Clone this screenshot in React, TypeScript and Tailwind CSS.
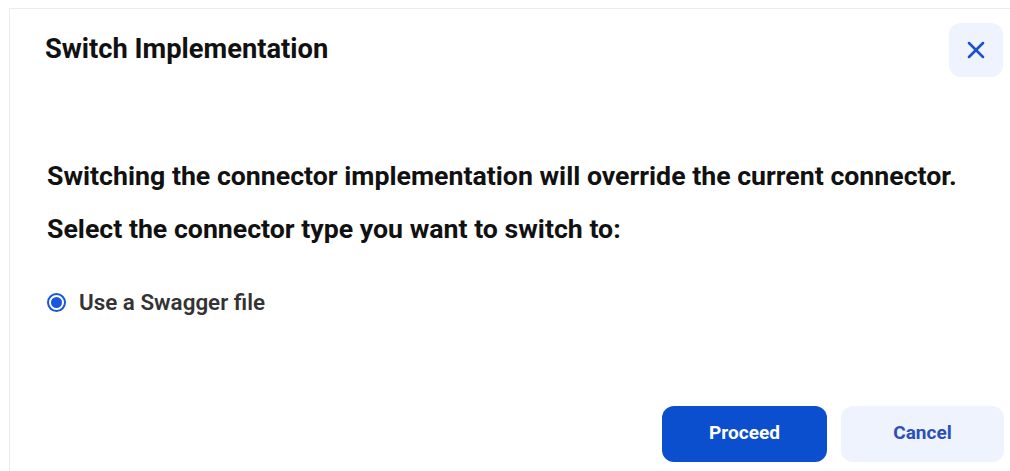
import { useState } from "react";
import { X } from "lucide-react";

export default function App() {
  const [choice, setChoice] = useState("swagger");

  return (
    <div className="h-[471px] w-[1010px] overflow-hidden bg-white pl-[9px] pt-[8px] font-['Roboto',sans-serif]">
      {/* dialog panel, bleeds past the right and bottom edges */}
      <div className="flex h-[480px] w-[1020px] flex-col border-l border-t border-[#ececec] bg-white">
        <div className="flex items-start justify-between pl-[35px] pr-[26px] pt-[14px]">
          <h2 className="pt-[11px] text-[27.3px] font-bold leading-[30px] text-[#111]">
            Switch Implementation
          </h2>
          <button className="flex h-[54px] w-[54px] items-center justify-center rounded-[12px] bg-[#eef3fd] text-[#1c50cc]">
            <X size={28} strokeWidth={2.2} />
          </button>
        </div>

        <div className="flex flex-col pl-[37px] pt-[84px]">
          <p className="text-[26.7px] font-bold leading-[30px] text-[#111]">
            Switching the connector implementation will override the current connector.
          </p>
          <p className="mt-[23px] text-[26.7px] font-bold leading-[30px] text-[#111]">
            Select the connector type you want to switch to:
          </p>

          <label className="mt-[42px] flex cursor-pointer items-center gap-[13px]">
            <span className="flex h-[19px] w-[19px] items-center justify-center rounded-full border-2 border-[#1a56db]">
              {choice === "swagger" && <span className="h-[11px] w-[11px] rounded-full bg-[#1a56db]" />}
            </span>
            <input
              type="radio"
              className="hidden"
              checked={choice === "swagger"}
              onChange={() => setChoice("swagger")}
            />
            <span className="text-[22.4px] font-semibold text-[#333]">Use a Swagger file</span>
          </label>
        </div>

        <div className="mt-[86px] flex gap-[14px] pl-[652px]">
          <button className="h-[56px] w-[165px] rounded-[12px] bg-[#0b4fce] text-[19px] font-bold text-white">
            Proceed
          </button>
          <button className="h-[56px] w-[163px] rounded-[12px] bg-[#eef3fd] text-[19px] font-bold text-[#2c50b8]">
            Cancel
          </button>
        </div>
      </div>
    </div>
  );
}
